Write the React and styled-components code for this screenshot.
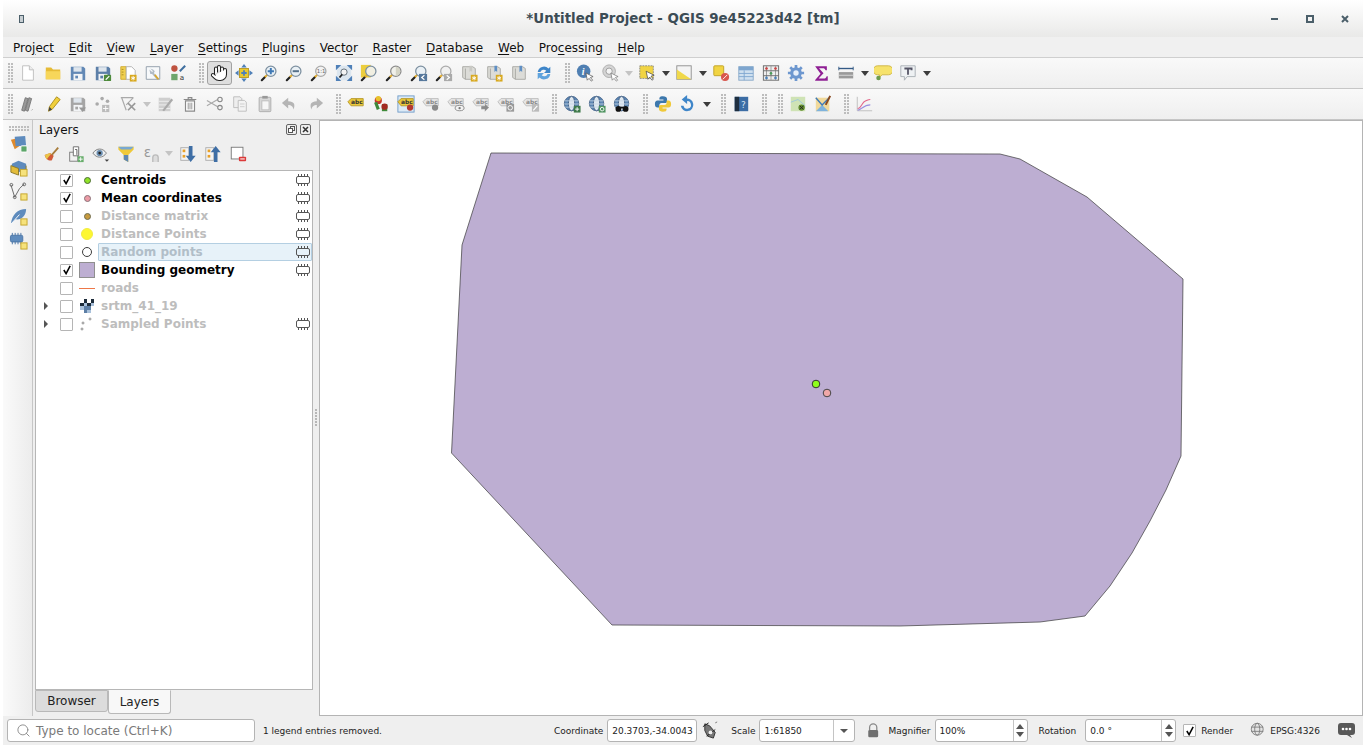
import React from 'react';
import styled, { createGlobalStyle } from 'styled-components';
import { Hand, Search } from 'lucide-react';

const GlobalStyle = createGlobalStyle`
  html, body { margin: 0; padding: 0; background: #fff; height: 100%; overflow: hidden; }
  body { font-family: "DejaVu Sans", "Liberation Sans", sans-serif; color: #111; }
`;

/* ---------- icon pieces ---------- */
const Badge = ({ c = '#d8a81e' }) => (
  <>
    <rect x="12" y="12" width="7.5" height="7.5" fill={c} />
    <path d="M15.7 13.2v5M13.5 14.5l4.4 2.5M17.9 14.5l-4.4 2.5" stroke="#fff" strokeWidth="1" />
  </>
);
const Glass = ({ fill = '#e9f0f5', ring = '#7d90a0', children }) => (
  <>
    <path d="M2 18l3.6-3.6" stroke="#222" strokeWidth="2.4" strokeLinecap="round" />
    <path d="M5.4 14.6l3-3" stroke="#e3ad2c" strokeWidth="2.2" />
    <circle cx="12" cy="8" r="5.7" fill={fill} stroke={ring} strokeWidth="1.4" />
    {children}
  </>
);
const Floppy = ({ c = '#6288b5' }) => (
  <>
    <path d="M2 3h14l2 2v13H2z" fill={c} />
    <rect x="5" y="3.5" width="9" height="5" fill="#dfe6ed" />
    <rect x="5" y="11" width="10" height="7" fill="#f2f4f6" />
    <rect x="7" y="13" width="3" height="3" fill={c} />
  </>
);
const Book = ({ ribbon = '#5f8fc4' }) => (
  <>
    <path d="M3 3h11l3 2v12H6l-3-2z" fill="#dcdcd8" stroke="#a6a6a2" />
    <path d="M6 5v12" stroke="#a6a6a2" />
    <path d="M10.5 2h3v7l-1.5-1.5L10.500 9z" fill={ribbon} />
  </>
);
const LabelTag = ({ c = '#e9c93a', edge = '#b7972a', text = '#333' }) => (
  <>
    <path d="M1 7.500L4.500 4H18v8H4.500z" fill={c} stroke={edge} />
    <text x="4.500" y="10.500" fontSize="6.500" fontWeight="700" fontFamily="DejaVu Sans" fill={text}>abc</text>
  </>
);
const Globe = ({ badge }) => (
  <>
    <circle cx="9.500" cy="9.500" r="8" fill="#5d87b4" stroke="#47658a" />
    <ellipse cx="9.500" cy="9.500" rx="3.500" ry="8" fill="#dfe8f0" stroke="#3c5a80" />
    <path d="M2 6.500h15M1.500 10h16M2.500 13.500h14" stroke="#c5d4e2" strokeWidth=".9" />
    {badge}
  </>
);
const Chip = ({ fill = 'none', c = '#444' }) => (
  <>
    <rect x="1.500" y="4.500" width="13" height="7" rx="1.500" fill={fill} stroke={c} />
    <path d="M3.500 2v2.500M6.500 2v2.500M9.500 2v2.500M12.500 2v2.500M3.500 11.500V14M6.500 11.500V14M9.500 11.500V14M12.500 11.500V14" stroke={c} />
  </>
);

const icons = {
  new: <><path d="M4 2h7.500l4.500 4.500V18H4z" fill="#fff" stroke="#bcbcbc" /><path d="M11.500 2v4.500H16" fill="#ececec" stroke="#bcbcbc" /></>,
  open: <><path d="M2 4h6l2 2h8v11H2z" fill="#e6bb36" /><path d="M2 8h16v9H2z" fill="#f7d65a" /></>,
  save: <Floppy />,
  saveas: <><Floppy c="#5c7fa8" /><rect x="11" y="12" width="8" height="7" rx="1" fill="#4d8a3a" /><path d="M13 17.500l4-4" stroke="#fff" strokeWidth="1.300" /></>,
  layout: <><path d="M2 3h6v14H2z" fill="#f0d050" stroke="#cfa92c" /><path d="M8 3h6l4 4v10H8z" fill="#fff" stroke="#b0b0b0" /><path d="M3 6h2M3 9h2M3 12h2" stroke="#a98a1e" /><Badge /></>,
  manager: <><path d="M2.500 3h15v14h-15z" fill="#f7f9fb" stroke="#8d9aa8" /><path d="M6 6l3 3 1-1-3-3 3 1 2 2-1 2 5 6-2 1-5-6-2 0z" fill="#b2bcc6" /><path d="M12 12l4 5" stroke="#d9a72c" strokeWidth="2" /></>,
  style: <><circle cx="6" cy="5" r="3.500" fill="#bf5340" /><rect x="2.500" y="11" width="7" height="7" fill="#6ea56c" /><path d="M18 2l-6 6" stroke="#3f6f9f" strokeWidth="2.200" /><text x="12" y="18" fontSize="8" fontFamily="DejaVu Sans" fill="#333">a</text></>,
  panSel: <><rect x="5" y="5" width="10" height="10" fill="#eac92f" stroke="#b59720" /><path d="M10 0l3 4H7zM10 20l3-4H7zM0 10l4-3v6zM20 10l-4-3v6z" fill="#4f80b8" /><path d="M7 10h6M10 7v6" stroke="#4f80b8" strokeWidth="2" /></>,
  zoomIn: <Glass><path d="M8.500 8h7M12 4.500v7" stroke="#3f79b5" strokeWidth="2.200" /></Glass>,
  zoomOut: <Glass><path d="M8.500 8h7" stroke="#55708a" strokeWidth="2.200" /></Glass>,
  zoomOne: <Glass fill="#f2f2f2" ring="#aaa"><text x="7.500" y="10" fontSize="6" fontFamily="DejaVu Sans" fill="#666">1:1</text></Glass>,
  zoomFull: <><rect x="2" y="2" width="16" height="16" fill="#dce6ef" /><path d="M1 1h6L1 7zM19 1h-6l6 6zM1 19h6l-6-6zM19 19h-6l6-6z" fill="#4f80b8" /><circle cx="10" cy="9" r="3.500" fill="#f3f3f3" stroke="#5a6670" /><path d="M5 15l3-3.500" stroke="#222" strokeWidth="2" /></>,
  zoomSel: <><rect x="1" y="1" width="11" height="14" fill="#ecce3e" /><Glass fill="#f1efe2" /></>,
  zoomLayer: <Glass fill="#f0f0ea" ring="#8b8b8b"><path d="M12 3a5 5 0 0 1 0 10z" fill="#d4d4c6" /></Glass>,
  zoomLast: <><Glass /><rect x="10" y="11" width="9" height="8" fill="#55779b" /><path d="M16 12.500l-3 2.500 3 2.500" fill="none" stroke="#fff" strokeWidth="1.300" /></>,
  zoomNext: <><Glass fill="#f1f1f1" ring="#aaa" /><rect x="10" y="11" width="9" height="8" fill="#aaa" /><path d="M13 12.500l3 2.500-3 2.500" fill="none" stroke="#fff" strokeWidth="1.300" /></>,
  bookNew: <><Book ribbon="#c9c9c4" /><Badge /></>,
  bookShow: <><Book /><Badge /></>,
  bookAll: <Book />,
  refresh: <><path d="M3 9a7 7 0 0 1 12-4l2-2v7h-7l2.500-2.500A4 4 0 0 0 6 9z" fill="#3f86c9" /><path d="M17 11a7 7 0 0 1-12 4l-2 2v-7h7l-2.500 2.500A4 4 0 0 0 14 11z" fill="#5fa3dd" /></>,
  identify: <><circle cx="8.500" cy="8" r="7.500" fill="#4f7fb2" /><text x="6.500" y="12.500" fontSize="11" fontWeight="700" fontStyle="italic" fontFamily="Liberation Serif" fill="#fff">i</text><path d="M11 10l8 4-3 1 2.500 3-1.500 1-2.500-3-2 2z" fill="#fff" stroke="#555" strokeWidth=".8" /></>,
  identifyOff: <><circle cx="9" cy="8" r="7" fill="#d4d4d4" stroke="#aaa" /><circle cx="9" cy="8" r="3.500" fill="#f4f4f4" stroke="#999" /><path d="M11 10l8 4-3 1 2.500 3-1.500 1-2.500-3-2 2z" fill="#fff" stroke="#777" strokeWidth=".8" /></>,
  select: <><rect x="2" y="2" width="15" height="14" fill="#f1d443" stroke="#888" strokeDasharray="2 1" /><path d="M9 8l9 4.500-3.500 1 2.500 3.500-1.500 1-2.500-3.500-2 2.500z" fill="#fff" stroke="#444" strokeWidth=".8" /></>,
  selectPoly: <><rect x="2" y="2" width="16" height="15" fill="#f4f4f4" stroke="#8d8d8d" /><path d="M2 6l16 11H2z" fill="#f0d84a" /></>,
  deselect: <><rect x="2" y="2" width="11" height="11" rx="1" fill="#f1d443" stroke="#bfa024" /><circle cx="14.500" cy="14.500" r="4.500" fill="#d8574e" /><path d="M12 17l5-5" stroke="#fff" /></>,
  table: <><rect x="2" y="3" width="16" height="15" fill="#cfe0ef" stroke="#88a8c8" /><rect x="2" y="3" width="16" height="4" fill="#7ea6cf" /><path d="M2 10.500h16M2 14h16M8 7v11" stroke="#7ea6cf" /></>,
  calc: <><rect x="1.500" y="2" width="17" height="16" fill="#eee" stroke="#666" /><path d="M5 2v16M10 2v16M15 2v16" stroke="#999" /><path d="M1.500 7.500h17M1.500 13h17" stroke="#666" /><circle cx="5" cy="5" r="1.500" fill="#c44" /><circle cx="15" cy="5" r="1.500" fill="#c44" /><circle cx="10" cy="10.500" r="1.500" fill="#4a9a5a" /><circle cx="5" cy="15.500" r="1.500" fill="#4a80b8" /><circle cx="15" cy="15.500" r="1.500" fill="#4a80b8" /></>,
  gear: <><circle cx="10" cy="10" r="6.500" fill="#6d97cf" /><path d="M10 1v18M1 10h18M3.600 3.600l12.800 12.800M16.400 3.600L3.600 16.400" stroke="#6d97cf" strokeWidth="3" /><circle cx="10" cy="10" r="3" fill="#e7effa" /></>,
  sigma: <path d="M3.500 2.500h13v4.500h-1.500c-.5-1.700-1.200-2.300-3-2.300H7.800l5 5.500-5.500 6h6c1.700 0 2.400-.7 3-2.500h1.200v5H3.500v-1l6-7z" fill="#8f1f94" />,
  measure: <><path d="M2 5h16" stroke="#345a86" strokeWidth="1.500" /><path d="M2 3v4M18 3v4" stroke="#345a86" /><rect x="2" y="9" width="16" height="7" fill="#9a9a9a" /><path d="M2 12.500h16" stroke="#ddd" /></>,
  tip: <><path d="M4 2h12a3.500 3.500 0 0 1 0 10H9l-3 3v-3H4A3.500 3.500 0 0 1 4 2z" fill="#f6e26b" stroke="#cdb445" /><circle cx="5" cy="15.500" r="2.500" fill="#6d9b4d" /></>,
  annot: <><path d="M2 2h16v12H9l-3 4v-4H2z" fill="#eef1f3" stroke="#a7aeb3" /><path d="M6 5h8v2M10 5v7" fill="none" stroke="#556" strokeWidth="2" /></>,
  edits: <><path d="M3 17L7 3l3 1-4 14zM7 17L11 3l3 1-4 14z" fill="#9a9a9a" stroke="#777" /><path d="M14 17l1-1" stroke="#888" /></>,
  pencil: <><path d="M5 18l1-5L14 2l4 3-9 11z" fill="#f0cf3c" stroke="#a88a1c" /><path d="M5 18l1-5 3 3z" fill="#444" /></>,
  saveEdits: <><Floppy c="#a5a5a5" /><path d="M11 14h8l-4 5z" fill="#999" /></>,
  addPoint: <><circle cx="3.500" cy="10" r="2" fill="#aaa" /><circle cx="9" cy="4" r="2" fill="#aaa" /><circle cx="15" cy="7" r="2" fill="#aaa" /><rect x="9" y="11" width="8" height="8" fill="#bbb" /><path d="M13 12v6M10 15h6" stroke="#fff" /></>,
  vertex: <><path d="M2 3h14M3 3l5 14M16 3l-8 8" fill="none" stroke="#aaa" strokeWidth="1.300" /><path d="M10 9l8 8M18 9l-8 8" stroke="#999" strokeWidth="1.800" /></>,
  modify: <><rect x="3" y="3" width="13" height="15" fill="#cfcfcf" /><path d="M3 7h13M3 11h13M3 15h13" stroke="#eee" /><path d="M7 17l10-13 2 1.500L9 18z" fill="#aaa" /></>,
  trash: <><path d="M3 5h14M8 5V3h4v2" fill="none" stroke="#8a8a8a" strokeWidth="1.300" /><path d="M5 6.500h10V18H5z" fill="#fff" stroke="#8a8a8a" strokeWidth="1.300" /><path d="M8 8.500V16M10 8.500V16M12 8.500V16" stroke="#8a8a8a" /></>,
  cut: <><path d="M1 6l12 7M1 12l12-7" stroke="#aaa" strokeWidth="1.300" /><circle cx="15.500" cy="5" r="2.500" fill="none" stroke="#888" strokeWidth="1.200" /><circle cx="15.500" cy="14" r="2.500" fill="none" stroke="#888" strokeWidth="1.200" /></>,
  copy: <><path d="M3 2h7l2 2v10H3z" fill="#eee" stroke="#bbb" /><path d="M8 6h7l2 2v10H8z" fill="#f3f3f3" stroke="#bbb" /><path d="M10 10h5M10 13h5" stroke="#ccc" /></>,
  paste: <><rect x="3.500" y="2.500" width="13" height="16" rx="1" fill="#d8d8d8" stroke="#aaa" /><rect x="7" y="1" width="6" height="3" fill="#999" /><rect x="6.500" y="6.500" width="8" height="10" fill="#f6f6f6" stroke="#bbb" /></>,
  undo: <path d="M8 3L1 9l7 6v-4c3 0 5 1 6 5 2-5 1-9-6-9z" fill="#b5b5b5" />,
  redo: <path d="M12 3l7 6-7 6v-4c-3 0-5 1-6 5-2-5-1-9 6-9z" fill="#b5b5b5" />,
  label1: <LabelTag />,
  label2: <><circle cx="7" cy="6" r="4" fill="#c7382e" /><circle cx="7" cy="4" r="3" fill="#e8c22c" /><path d="M4 8l3 8" stroke="#3e8a3a" strokeWidth="3.500" /><rect x="11" y="10" width="6" height="8" fill="#3e8a3a" /><circle cx="14" cy="13" r="3.500" fill="#a32a22" /></>,
  label3: <><rect x="1" y="1" width="18" height="18" fill="#dceaf6" stroke="#6d9ac8" /><LabelTag /><circle cx="14.500" cy="14" r="3.500" fill="#b63a30" /></>,
  label4: <><LabelTag c="#e6e6e6" edge="#bbb" text="#888" /><circle cx="14.500" cy="14" r="3.500" fill="#8a8a8a" /></>,
  label5: <><LabelTag c="#e6e6e6" edge="#bbb" text="#888" /><ellipse cx="14" cy="14.500" rx="5" ry="3" fill="#f2f2f2" stroke="#888" /><circle cx="14" cy="14.500" r="1.300" fill="#777" /></>,
  label6: <><LabelTag c="#e6e6e6" edge="#bbb" text="#888" /><path d="M10 12h4V9l5 5-5 5v-3h-4z" fill="#8a8a8a" stroke="#fff" strokeWidth=".5" /></>,
  label7: <><LabelTag c="#e6e6e6" edge="#bbb" text="#888" /><rect x="10.500" y="10" width="8.500" height="8.500" fill="#999" /><circle cx="14.700" cy="14.200" r="2.500" fill="none" stroke="#fff" /></>,
  label8: <><LabelTag c="#e6e6e6" edge="#bbb" text="#888" /><rect x="11" y="10" width="8" height="8.500" fill="#bbb" /><path d="M12.500 17l4.500-5" stroke="#fff" strokeWidth="1.300" /></>,
  globeAdd: <Globe badge={<><rect x="12" y="12" width="7.500" height="7.500" fill="#3f7a4a" /><path d="M15.700 13.500v4.500M13.500 15.700h4.500" stroke="#fff" /></>} />,
  globeEdit: <Globe badge={<><rect x="12" y="12" width="7.500" height="7.500" fill="#4f9460" /><circle cx="15.700" cy="15.700" r="2" fill="none" stroke="#fff" /></>} />,
  globeFind: <Globe badge={<><circle cx="6" cy="15.500" r="3.200" fill="#111" /><circle cx="14" cy="15.500" r="3.200" fill="#111" /><path d="M8 14h4" stroke="#111" strokeWidth="2" /></>} />,
  python: <><path d="M10 1.500c-4 0-4 1.500-4 3.500h4.500v1H4c-2 0-3 1.500-3 4s1 4 3 4h2v-2.500c0-1.500 1-2.500 2.500-2.500h4c1.200 0 2-1 2-2V4.500c0-2-2-3-4.500-3z" fill="#3d78ad" /><path d="M10 18.500c4 0 4-1.500 4-3.500H9.500v-1H16c2 0 3-1.500 3-4s-1-4-3-4h-2v2.500c0 1.500-1 2.500-2.500 2.500h-4c-1.200 0-2 1-2 2v2.500c0 2 2 3 4.500 3z" fill="#f0c93a" /></>,
  update: <><path d="M8 4a7 7 0 1 1-6 8h3a4.200 4.200 0 1 0 3-5z" fill="#3f86c9" /><path d="M9 0v10L3 5z" fill="#3f86c9" /></>,
  help: <><rect x="3" y="2" width="15" height="16" fill="#3c6da5" /><rect x="3" y="2" width="5" height="16" fill="#1f2f40" /><text x="10" y="14" fontSize="10" fontFamily="DejaVu Sans" fill="#d6e4f2">?</text></>,
  map: <><rect x="2" y="2" width="16" height="16" fill="#cfe3b5" /><path d="M2 8l8-3 8 7" fill="none" stroke="#9cc6e0" /><circle cx="14" cy="14" r="3.500" fill="#5f8a2d" /><path d="M12 12l4 4M16 12l-4 4" stroke="#222" /></>,
  mapEdit: <><rect x="2" y="3" width="15" height="15" fill="#f1d99b" /><path d="M2 18l7-7 7 7z" fill="#7fb3dd" /><path d="M2 3l7 8 8-8" fill="none" stroke="#3e7ab8" strokeWidth="1.600" /><path d="M13 11L18 1" stroke="#8a4a20" strokeWidth="2.200" /></>,
  chart: <><path d="M2.500 2v15.500H19" fill="none" stroke="#bbb" /><path d="M3 15c4 0 5-7 8-8s3-2 6-2" fill="none" stroke="#e2668a" strokeWidth="1.200" /><path d="M3 17c4-1 7-6 14-6" fill="none" stroke="#9a8fe0" strokeWidth="1.200" /></>,
  tStyle: <><path d="M2 6l9-2 4 6-9 6z" fill="#df8a2e" /><path d="M6 3l11-1 1 10-11 1z" fill="#5e8bbd" /><rect x="12.500" y="12.500" width="6.500" height="6.500" rx="1" fill="#5da66a" stroke="#fff" /></>,
  tGroup: <><path d="M3 6l7-3 8 3v6l-8 3-7-3z" fill="#5e8bbd" /><path d="M2 8l8 3v7l-8-3zM18 8v5" fill="#e3bc3a" stroke="#8c7a2a" /><rect x="12" y="12" width="7" height="7" fill="#f6e27c" stroke="#c5a52c" /></>,
  tDigit: <><path d="M2 3l4 13 5-9 5-5" fill="none" stroke="#666" /><circle cx="2.500" cy="3" r="1.500" fill="none" stroke="#666" /><circle cx="6" cy="16" r="1.500" fill="none" stroke="#666" /><circle cx="16" cy="2.500" r="1.500" fill="none" stroke="#666" /><rect x="12.500" y="12.500" width="6.500" height="6.500" fill="#f6e27c" stroke="#c5a52c" /></>,
  tFeather: <><path d="M2 18C3 8 9 2 18 2c0 7-5 12-11 11z" fill="#5e8bbd" /><path d="M2 18l9-10" stroke="#fff" /><rect x="12.500" y="12.500" width="6.500" height="6.500" fill="#f6e27c" stroke="#c5a52c" /></>,
  tMem: <><Chip fill="#5e8bbd" c="#4c75a5" /><rect x="12.500" y="12.500" width="6.500" height="6.500" fill="#f6e27c" stroke="#c5a52c" /></>,
  brush: <><path d="M3 11l6-2 4 3-2 5c-4 1-7-2-8-6z" fill="#d15a38" /><path d="M3 11l6-2 1 1-5 6z" fill="#eac548" /><path d="M11 11l7-8" stroke="#a77c3a" strokeWidth="2" /></>,
  clip: <><rect x="3" y="8" width="9" height="10" fill="#f1f1f1" stroke="#777" /><path d="M7 2h6v10H7z" fill="#fff" stroke="#666" /><path d="M9 5h2v6" fill="none" stroke="#555" /><rect x="12" y="12.500" width="6.500" height="6.500" fill="#67ad6b" /><path d="M15.200 13.500v4.500M13 15.700h4.500" stroke="#fff" /></>,
  eye: <><path d="M1 9c4-6 11-6 15 0-4 6-11 6-15 0z" fill="#eceff1" stroke="#777" /><circle cx="8.500" cy="9" r="3.500" fill="#6a8db0" /><circle cx="8.500" cy="9" r="1.500" fill="#222" /><path d="M14 16h5l-2.500 2.500z" fill="#444" /></>,
  funnel: <><path d="M1.500 2h17v3L12.500 11v8l-5-3v-5L1.500 5z" fill="#efc93a" /><path d="M1.500 2h17l-3 3h-11z" fill="#78a8d2" /><path d="M7.500 11l5 0v8l-5-3z" fill="#5d87b4" /></>,
  epsilon: <><text x="2" y="13" fontSize="15" fontFamily="DejaVu Sans" fill="#999">ε</text><path d="M12 19v-5a3 3 0 0 1 6 0v5" fill="#ddd" stroke="#bbb" strokeWidth="1.500" /></>,
  expand: <><rect x="2" y="3" width="9" height="14" fill="#f4f4f4" stroke="#aaa" /><rect x="4" y="5" width="3" height="3" fill="#e8a028" /><rect x="4" y="11" width="3" height="3" fill="#e8a028" /><path d="M11 1v11H7.500l5.500 7 5.500-7H15V1z" fill="#3e6ea5" /></>,
  collapse: <><rect x="2" y="3" width="9" height="14" fill="#f4f4f4" stroke="#aaa" /><rect x="4" y="5" width="3" height="3" fill="#e8a028" /><rect x="4" y="11" width="3" height="3" fill="#e8a028" /><path d="M11 19V8H7.500L13 1l5.500 7H15v11z" fill="#3e6ea5" /></>,
  remove: <><rect x="2.500" y="2.500" width="13" height="13" fill="#fff" stroke="#777" /><rect x="11" y="13" width="8" height="5" rx="1" fill="#dc3a3a" /><path d="M12.500 15.500h5" stroke="#fff" strokeWidth="1.200" /></>,
  lock: <><path d="M4 9V6a4 4 0 0 1 8 0v3" fill="none" stroke="#888" strokeWidth="1.400" /><rect x="2.500" y="9" width="11" height="8" rx="1.500" fill="#6f6f6f" /></>,
  mouse: <><path d="M4 3l5 2 6 7-2 6-6-2-3-6z" fill="#777" stroke="#333" /><path d="M2 6l6-4M6 16l9-7" stroke="#222" /><circle cx="10" cy="12" r="2" fill="#eee" /><path d="M15 2l2-1" stroke="#777" /></>,
  crs: <><circle cx="8.500" cy="8.500" r="7" fill="#e4e4e4" stroke="#777" /><ellipse cx="8.500" cy="8.500" rx="3" ry="7" fill="none" stroke="#777" /><path d="M1.500 6h14M1.500 11h14" stroke="#777" /></>,
  chat: <><path d="M3 2h11a3 3 0 0 1 3 3v6a3 3 0 0 1-3 3h-2l2 3-5-3H3a3 3 0 0 1-3-3V5a3 3 0 0 1 3-3z" fill="#585858" /><circle cx="5" cy="8" r="1.300" fill="#fff" /><circle cx="8.500" cy="8" r="1.300" fill="#fff" /><circle cx="12" cy="8" r="1.300" fill="#fff" /></>,
};

const Icon = ({ name, size = 18 }) => (
  <svg width={size} height={size} viewBox="0 0 20 20" aria-hidden="true">{icons[name]}</svg>
);

/* ---------- window frame ---------- */
const Win = styled.div`
  width: 1360px;
  height: 745px;
  margin-left: 3px;
  display: flex;
  flex-direction: column;
  background: #efefef;
`;

const TitleBar = styled.div`
  height: 37px;
  flex: none;
  display: grid;
  grid-template-columns: 1fr auto 1fr;
  align-items: center;
  background: linear-gradient(#ffffff, #e9e9e8);
`;

const Title = styled.div`
  font-size: 13.400px;
  font-weight: 700;
  color: #3c4c55;
`;

const PinMark = styled.span`
  display: block;
  width: 3px;
  height: 6px;
  margin-left: 16px;
  border: 1px solid #4b5f6a;
  background: #c7ced2;
`;

const WinButtons = styled.div`
  display: flex;
  justify-content: flex-end;
  padding-right: 1px;
`;

const WinButton = styled.span`
  width: 35px;
  height: 16px;
  display: flex;
  align-items: center;
  justify-content: center;
`;

const MenuBar = styled.nav`
  height: 21px;
  flex: none;
  box-sizing: border-box;
  display: flex;
  align-items: center;
  gap: 14.700px;
  padding: 1px 0 0 10px;
  background: #f0f0f0;
  font-size: 12px;
  border-bottom: 1px solid #cfcfcf;
`;

const MenuItem = styled.span`
  white-space: nowrap;
  u { text-decoration-thickness: 1px; text-underline-offset: 2px; }
`;

const ToolBar = styled.div`
  height: 30px;
  flex: none;
  display: flex;
  align-items: center;
  background: linear-gradient(#f9f9f9, #efefef);
  border-bottom: 1px solid #c6c6c6;
`;

const ToolButton = styled.span`
  width: 25px;
  height: 24px;
  flex: none;
  box-sizing: border-box;
  display: flex;
  align-items: center;
  justify-content: center;
  border-radius: 3px;
  border: 1px solid ${(p) => (p.$on ? '#a2a2a2' : 'transparent')};
  background: ${(p) => (p.$on ? '#dedede' : 'transparent')};
`;

const Arrow = styled.span`
  width: 12px;
  flex: none;
  display: flex;
  justify-content: center;
  &::after {
    content: '';
    border-left: 4.500px solid transparent;
    border-right: 4.500px solid transparent;
    border-top: 5px solid ${(p) => (p.$off ? '#c4c4c4' : '#3c3c3c')};
  }
`;

const Grip = styled.span`
  width: ${(p) => (p.$first ? 12.5 : 12)}px;
  height: 20px;
  flex: none;
  margin-left: ${(p) => (p.$first ? 0 : 4)}px;
  padding-left: ${(p) => (p.$first ? 5 : 4)}px;
  box-sizing: border-box;
  &::before {
    content: '';
    display: block;
    width: 5px;
    height: 20px;
    background: radial-gradient(circle at 1px 1px, #bdbdbd 0.8px, transparent 1px) 0 0 / 3px 3px;
  }
`;

/* ---------- body ---------- */
const Body = styled.div`
  flex: 1;
  min-height: 0;
  display: flex;
`;

const SideBar = styled.div`
  width: 30px;
  flex: none;
  display: flex;
  flex-direction: column;
  align-items: center;
  padding: 6px 0 0 2px;
  box-sizing: border-box;
  background: linear-gradient(to right, #fafafa, #ececec);
  border-right: 1px solid #c6c6c6;
`;

const SideGrip = styled.span`
  width: 20px;
  height: 5px;
  background: radial-gradient(circle at 1px 1px, #bdbdbd 0.8px, transparent 1px) 0 0 / 3px 3px;
`;

const SideButton = styled.span`
  height: 24.300px;
  display: flex;
  align-items: center;
`;

const Dock = styled.section`
  width: 281px;
  flex: none;
  display: flex;
  flex-direction: column;
  padding: 0 1px 0 2px;
  box-sizing: border-box;
`;

const DockTitle = styled.div`
  height: 19px;
  flex: none;
  display: flex;
  align-items: center;
  justify-content: space-between;
  padding: 0 2px 0 4px;
  font-size: 12px;
`;

const DockButtons = styled.div`
  display: flex;
  gap: 3px;
`;

const DockButton = styled.span`
  width: 9px;
  height: 9px;
  border: 1px solid #666;
  border-radius: 2px;
  display: flex;
  align-items: center;
  justify-content: center;
`;

const DockTools = styled.div`
  height: 31px;
  flex: none;
  box-sizing: border-box;
  display: flex;
  align-items: center;
  padding: 0 0 2px 3px;
`;

const Tree = styled.div`
  flex: 1;
  min-height: 0;
  background: #fff;
  border: 1px solid #b6b6b6;
`;

const Row = styled.div`
  height: 18px;
  display: flex;
  align-items: center;
`;

const Expander = styled.span`
  width: 24px;
  flex: none;
  box-sizing: border-box;
  padding-right: 4px;
  display: flex;
  justify-content: center;
  &::after {
    content: '';
    visibility: ${(p) => (p.$show ? 'visible' : 'hidden')};
    border-top: 4px solid transparent;
    border-bottom: 4px solid transparent;
    border-left: 4px solid #555;
  }
`;

const Check = styled.span`
  width: 11px;
  height: 11px;
  flex: none;
  box-sizing: content-box;
  border: 1px solid #b5b5b5;
  border-radius: 1px;
  background: #fff;
  display: flex;
  align-items: center;
  justify-content: center;
`;

const SymbolBox = styled.span`
  width: 20px;
  margin-left: 4px;
  flex: none;
  display: flex;
  align-items: center;
  justify-content: center;
`;

const Dot = styled.span`
  width: ${(p) => p.$size}px;
  height: ${(p) => p.$size}px;
  border-radius: 50%;
  background: ${(p) => p.$color};
  border: 1px solid ${(p) => p.$edge || '#3c3c3c'};
`;

const Swatch = styled.span`
  width: 14px;
  height: 14px;
  background: #bdaed2;
  border: 1px solid #8f8f8f;
`;

const LineSym = styled.span`
  width: 16px;
  height: 2px;
  margin-top: 1px;
  background: linear-gradient(#ee7748 50%, transparent 50%);
`;

const RowLabel = styled.div`
  flex: 1;
  height: 18px;
  margin-left: 1px;
  box-sizing: border-box;
  min-width: 0;
  display: flex;
  align-items: center;
  justify-content: space-between;
  padding-left: 2px;
  border: 1px solid ${(p) => (p.$sel ? '#b4cfe2' : 'transparent')};
  border-radius: 1px;
  background: ${(p) => (p.$sel ? '#e7f2f9' : 'transparent')};
`;

const RowText = styled.span`
  font-size: 12px;
  font-weight: 700;
  white-space: nowrap;
  color: ${(p) => (p.$sel ? '#b1bec8' : p.$on ? '#000' : '#bdbdbd')};
`;

const Tabs = styled.div`
  height: 26px;
  flex: none;
  display: flex;
  align-items: flex-start;
  font-size: 12px;
`;

const Tab = styled.span`
  height: ${(p) => (p.$on ? 24 : 22)}px;
  width: ${(p) => (p.$on ? 63 : 73)}px;
  box-sizing: border-box;
  display: flex;
  align-items: center;
  justify-content: center;
  border: 1px solid #b9b9b9;
  border-top-color: ${(p) => (p.$on ? 'transparent' : '#b9b9b9')};
  border-radius: 0 0 3px 3px;
  background: ${(p) => (p.$on ? '#f8f8f8' : '#dcdcdc')};
  color: #222;
`;

const Splitter = styled.div`
  width: 5px;
  flex: none;
  display: flex;
  align-items: center;
  justify-content: center;
  &::before {
    content: '';
    width: 3px;
    height: 18px;
    background: radial-gradient(circle at 1px 1px, #b5b5b5 0.7px, transparent 0.9px) 0 0 / 3px 3px;
  }
`;

const Canvas = styled.div`
  flex: 1;
  min-width: 0;
  background: #fff;
  border: 1px solid #b4b4b4;
  box-sizing: border-box;
  overflow: hidden;
  svg { display: block; }
`;

/* ---------- status bar ---------- */
const StatusBar = styled.footer`
  height: 29px;
  flex: none;
  display: flex;
  align-items: center;
  font-size: 9px;
  padding-left: 4px;
  color: #222;
`;

const Locator = styled.div`
  width: 248px;
  height: 23px;
  box-sizing: border-box;
  display: flex;
  align-items: center;
  gap: 5px;
  padding-left: 8px;
  background: #fff;
  border: 1px solid #b4b4b4;
  border-radius: 3px;
  font-size: 12px;
  color: #7a7a7a;
`;

const Message = styled.span`
  margin-left: 8px;
  flex: 1;
`;

const StatusLabel = styled.span`
  margin-left: ${(p) => p.$ml || 0}px;
  margin-right: ${(p) => p.$mr || 4}px;
  white-space: nowrap;
`;

const Field = styled.div`
  width: ${(p) => p.$w}px;
  height: 23px;
  flex: none;
  box-sizing: border-box;
  display: flex;
  align-items: center;
  background: #fff;
  border: 1px solid #b4b4b4;
  border-radius: 3px;
  padding-left: 4px;
  font-size: 9px;
`;

const FieldText = styled.span`
  flex: 1;
  white-space: nowrap;
`;

const DropPart = styled.span`
  width: 20px;
  height: 100%;
  border-left: 1px solid #c4c4c4;
  display: flex;
  align-items: center;
  justify-content: center;
  &::after {
    content: '';
    border-left: 4px solid transparent;
    border-right: 4px solid transparent;
    border-top: 4px solid #555;
  }
`;

const SpinPart = styled.span`
  width: 13px;
  height: 100%;
  border-left: 1px solid #c4c4c4;
  display: flex;
  flex-direction: column;
  align-items: center;
  justify-content: center;
  gap: 3px;
  &::before {
    content: '';
    border-left: 4px solid transparent;
    border-right: 4px solid transparent;
    border-bottom: 5px solid #555;
  }
  &::after {
    content: '';
    border-left: 4px solid transparent;
    border-right: 4px solid transparent;
    border-top: 5px solid #555;
  }
`;

const StatusIcon = styled.span`
  display: flex;
  flex: none;
  margin-left: ${(p) => p.$ml || 0}px;
  margin-right: ${(p) => p.$mr || 0}px;
`;

const toolRowOne = [
  'grip:first', 'new', 'open', 'save', 'saveas', 'layout', 'manager', 'style', 'grip',
  'pan', 'panSel', 'zoomIn', 'zoomOut', 'zoomOne', 'zoomFull', 'zoomSel', 'zoomLayer', 'zoomLast', 'zoomNext',
  'bookNew', 'bookShow', 'bookAll', 'refresh', 'grip',
  'identify', 'identifyOff', 'arrow:off', 'select', 'arrow', 'selectPoly', 'arrow', 'deselect', 'table', 'calc', 'gear', 'sigma',
  'measure', 'arrow', 'tip', 'annot', 'arrow',
];

const toolRowTwo = [
  'grip:first', 'edits', 'pencil', 'saveEdits', 'addPoint', 'vertex', 'arrow:off', 'modify', 'trash', 'cut', 'copy', 'paste', 'undo', 'redo', 'grip',
  'label1', 'label2', 'label3', 'label4', 'label5', 'label6', 'label7', 'label8', 'grip',
  'globeAdd', 'globeEdit', 'globeFind', 'grip', 'python', 'update', 'arrow', 'grip', 'help', 'grip', 'grip', 'map', 'mapEdit', 'grip', 'chart',
];

const renderTool = (item, i) => {
  if (item === 'grip:first') return <Grip key={i} $first />;
  if (item === 'grip') return <Grip key={i} />;
  if (item === 'arrow') return <Arrow key={i} />;
  if (item === 'arrow:off') return <Arrow key={i} $off />;
  if (item === 'pan') {
    return (
      <ToolButton key={i} $on>
        <Hand size={18} strokeWidth={1.4} color="#222" fill="#fff" />
      </ToolButton>
    );
  }
  return <ToolButton key={i}><Icon name={item} /></ToolButton>;
};

const Raster = () => (
  <svg width="14" height="14" viewBox="0 0 4 4" shapeRendering="crispEdges">
    <rect width="4" height="4" fill="#fff" />
    <path d="M1 0h1v1H1zM0 1h1v1H0zM2 1h1v1H2zM3 0h1v1H3z" fill="#1d2c3a" />
    <path d="M1 1h1v1H1zM0 2h1v1H0zM3 1h1v1H3zM2 3h1v1H2z" fill="#a8c0da" />
    <path d="M1 2h2v1H1zM1 3h1v1H1z" fill="#5d7fa6" />
  </svg>
);

const Sampled = () => (
  <svg width="16" height="16" viewBox="0 0 16 16" fill="none" stroke="#777" strokeWidth=".8">
    <circle cx="3" cy="13" r="1" />
    <circle cx="4" cy="7" r="1" />
    <circle cx="11" cy="3" r="1" />
  </svg>
);

const layers = [
  { name: 'Centroids', on: true, chip: true, sym: <Dot $size={5} $color="#8fe328" $edge="#4d6b33" /> },
  { name: 'Mean coordinates', on: true, chip: true, sym: <Dot $size={5} $color="#ec9ba6" $edge="#8a7278" /> },
  { name: 'Distance matrix', chip: true, sym: <Dot $size={5} $color="#c79a3f" $edge="#6d6d50" /> },
  { name: 'Distance Points', chip: true, sym: <Dot $size={10} $color="#fdf731" $edge="#f2ec44" /> },
  { name: 'Random points', chip: true, sel: true, sym: <Dot $size={8} $color="#fff" /> },
  { name: 'Bounding geometry', on: true, chip: true, sym: <Swatch /> },
  { name: 'roads', sym: <LineSym /> },
  { name: 'srtm_41_19', expand: true, sym: <Raster /> },
  { name: 'Sampled Points', expand: true, chip: true, sym: <Sampled /> },
];

// menu title and the index of its underlined letter
const menus = [
  ['Project', 3], ['Edit', 0], ['View', 0], ['Layer', 0], ['Settings', 0], ['Plugins', 0],
  ['Vector', 4], ['Raster', 0], ['Database', 0], ['Web', 0], ['Processing', 3], ['Help', 0],
];

const CheckMark = () => (
  <svg width="10" height="10" viewBox="0 0 11 11">
    <path d="M2 5.500l2.500 4L9 1" fill="none" stroke="#000" strokeWidth="1.700" />
  </svg>
);

const polygon = '491,153 1000,154 1020,159 1087,197 1183,279 1181,456 1166,490 1150,521 1132,553 1110,586 1085,616 1040,622 900,626 612,625 451.500,453 462,245';

export default function App() {
  return (
    <>
      <GlobalStyle />
      <Win>
        <TitleBar>
          <PinMark />
          <Title>*Untitled Project - QGIS 9e45223d42 [tm]</Title>
          <WinButtons>
            <WinButton>
              <svg width="7" height="3"><rect width="7" height="2" y="1" fill="#4b5f6a" /></svg>
            </WinButton>
            <WinButton>
              <svg width="8" height="8"><rect x="1" y="1" width="6" height="6" fill="none" stroke="#4b5f6a" strokeWidth="2" /></svg>
            </WinButton>
            <WinButton>
              <svg width="8" height="8"><path d="M1 1l6 6M7 1l-6 6" stroke="#4b5f6a" strokeWidth="2" /></svg>
            </WinButton>
          </WinButtons>
        </TitleBar>

        <MenuBar>
          {menus.map(([m, u]) => (
            <MenuItem key={m}>{m.slice(0, u)}<u>{m[u]}</u>{m.slice(u + 1)}</MenuItem>
          ))}
        </MenuBar>

        <ToolBar>{toolRowOne.map(renderTool)}</ToolBar>
        <ToolBar>{toolRowTwo.map(renderTool)}</ToolBar>

        <Body>
          <SideBar>
            <SideGrip />
            {['tStyle', 'tGroup', 'tDigit', 'tFeather', 'tMem'].map((n) => (
              <SideButton key={n}><Icon name={n} size={19} /></SideButton>
            ))}
          </SideBar>

          <Dock>
            <DockTitle>
              Layers
              <DockButtons>
                <DockButton>
                  <svg width="7" height="7"><rect x="2.500" y=".5" width="4" height="4" fill="none" stroke="#555" /><rect x=".5" y="2.500" width="4" height="4" fill="#fff" stroke="#555" /></svg>
                </DockButton>
                <DockButton>
                  <svg width="7" height="7"><path d="M1 1l5 5M6 1l-5 5" stroke="#333" strokeWidth="1.500" /></svg>
                </DockButton>
              </DockButtons>
            </DockTitle>
            <DockTools>
              {['brush', 'clip', 'eye', 'funnel', 'epsilon'].map((n) => <ToolButton key={n}><Icon name={n} /></ToolButton>)}
              <Arrow $off />
              {['expand', 'collapse', 'remove'].map((n) => <ToolButton key={n}><Icon name={n} /></ToolButton>)}
            </DockTools>
            <Tree>
              {layers.map((l) => (
                <Row key={l.name}>
                  <Expander $show={l.expand} />
                  <Check>{l.on && <CheckMark />}</Check>
                  <SymbolBox>{l.sym}</SymbolBox>
                  <RowLabel $sel={l.sel}>
                    <RowText $on={l.on} $sel={l.sel}>{l.name}</RowText>
                    {l.chip && (
                      <svg width="16" height="16" viewBox="0 0 16 16" fill="none">
                        <Chip c="#555" />
                      </svg>
                    )}
                  </RowLabel>
                </Row>
              ))}
            </Tree>
            <Tabs>
              <Tab>Browser</Tab>
              <Tab $on>Layers</Tab>
            </Tabs>
          </Dock>

          <Splitter />

          <Canvas>
            <svg width="1042" height="594" viewBox="320 121 1042 594">
              <polygon points={polygon} fill="#bdaed2" stroke="#3a3a3a" strokeWidth=".7" />
              <circle cx="816" cy="384" r="3.800" fill="#8fff1c" stroke="#333" />
              <circle cx="827" cy="393" r="3.800" fill="#f0a8a8" stroke="#444" />
            </svg>
          </Canvas>
        </Body>

        <StatusBar>
          <Locator>
            <Search size={15} color="#8a8a8a" strokeWidth={1.500} />
            Type to locate (Ctrl+K)
          </Locator>
          <Message>1 legend entries removed.</Message>
          <StatusLabel>Coordinate</StatusLabel>
          <Field $w={90}><FieldText>20.3703,-34.0043</FieldText></Field>
          <StatusIcon $ml={4}><Icon name="mouse" size={19} /></StatusIcon>
          <StatusLabel $ml={11}>Scale</StatusLabel>
          <Field $w={96}><FieldText>1:61850</FieldText><DropPart /></Field>
          <StatusIcon $ml={11}><Icon name="lock" size={18} /></StatusIcon>
          <StatusLabel $ml={4}>Magnifier</StatusLabel>
          <Field $w={93}><FieldText>100%</FieldText><SpinPart /></Field>
          <StatusLabel $ml={11} $mr={9}>Rotation</StatusLabel>
          <Field $w={91}><FieldText>0.0 °</FieldText><SpinPart /></Field>
          <StatusIcon $ml={7}><Check><CheckMark /></Check></StatusIcon>
          <StatusLabel $ml={5}>Render</StatusLabel>
          <StatusIcon $ml={13}><Icon name="crs" size={17} /></StatusIcon>
          <StatusLabel $ml={3}>EPSG:4326</StatusLabel>
          <StatusIcon $ml={14} $mr={5}><Icon name="chat" size={20} /></StatusIcon>
        </StatusBar>
      </Win>
    </>
  );
}
